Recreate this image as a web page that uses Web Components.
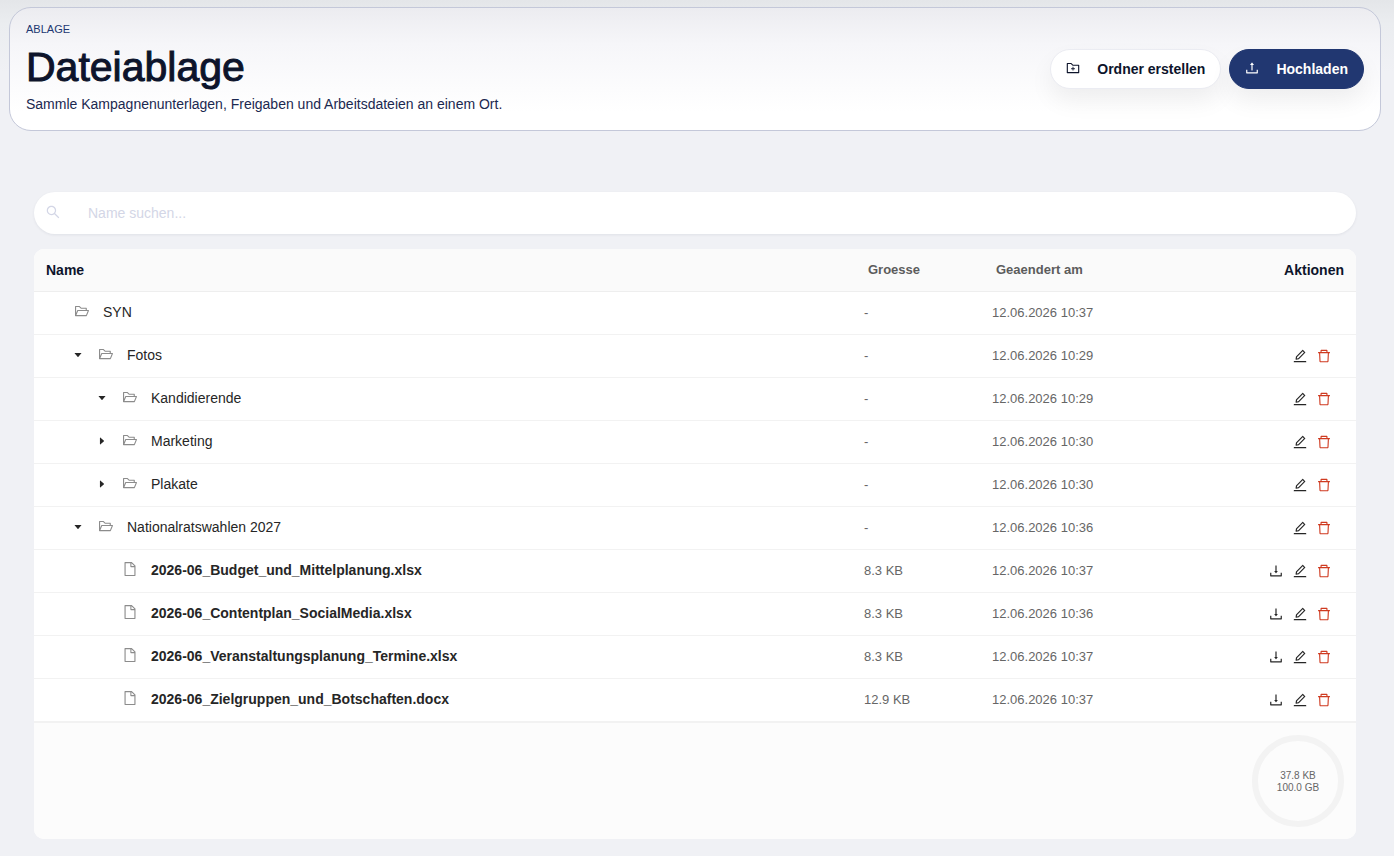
<!DOCTYPE html>
<html lang="de">
<head>
<meta charset="utf-8">
<meta name="viewport" content="width=device-width, initial-scale=1">
<title>Dateiablage</title>
<style>
  body {
    margin: 0;
    min-height: 100vh;
    box-sizing: border-box;
    padding: 7px 13px 17px 9px;
    background: #f0f1f5 linear-gradient(#e4e6e9, #ebedf0 24px, #f0f1f5 72px) no-repeat;
    font-family: "Helvetica Neue", "Liberation Sans", Arial, sans-serif;
    font-size: 14px;
    color: #262626;
  }
  main {
    display: flex;
    flex-direction: column;
    gap: 15px;
    margin: 61px 25px 0;
  }
</style>
</head>
<body>

<page-header>
  <span slot="eyebrow">ABLAGE</span>
  <span slot="title">Dateiablage</span>
  <span slot="text">Sammle Kampagnenunterlagen, Freigaben und Arbeitsdateien an einem Ort.</span>
  <pill-button slot="actions" icon="folder-add">Ordner erstellen</pill-button>
  <pill-button slot="actions" icon="upload" primary>Hochladen</pill-button>
</page-header>

<main>
  <search-field placeholder="Name suchen..."></search-field>
  <file-table>
    <storage-usage slot="footer" used="37.8 KB" total="100.0 GB"></storage-usage>
  </file-table>
</main>

<script>
const TRAY = 'M878 626h-60c-4.4 0-8 3.6-8 8v154H214V634c0-4.4-3.6-8-8-8h-60c-4.4 0-8 3.6-8 8v198c0 17.7 14.3 32 32 32h684c17.7 0 32-14.3 32-32V634c0-4.4-3.6-8-8-8z';

const ICONS = {
  'folder-open': 'M928 444H820V330.4c0-17.7-14.3-32-32-32H473L355.7 186.2a8.15 8.15 0 00-5.5-2.2H96c-17.7 0-32 14.3-32 32v592c0 17.7 14.3 32 32 32h698c13 0 24.8-7.9 29.7-20l134-332c1.5-3.8 2.3-7.9 2.3-12 0-17.7-14.3-32-32-32zM136 256h188.5l119.6 114.4H748V444H238c-13 0-24.8 7.9-29.7 20L136 643.2V256zm635.3 512H159l103.3-256h612.4L771.3 768z',
  'folder-add': 'M484 443.1V528h-84.5c-4.1 0-7.5 3.1-7.5 7v42c0 3.8 3.4 7 7.5 7H484v84.9c0 3.9 3.2 7.1 7 7.1h42c3.9 0 7-3.2 7-7.1V584h84.5c4.1 0 7.5-3.2 7.5-7v-42c0-3.9-3.4-7-7.5-7H540v-84.9c0-3.9-3.1-7.1-7-7.1h-42c-3.8 0-7 3.2-7 7.1zm396-144.7H521L403.7 186.2a8.15 8.15 0 00-5.5-2.2H144c-17.7 0-32 14.3-32 32v592c0 17.7 14.3 32 32 32h736c17.7 0 32-14.3 32-32V330.4c0-17.7-14.3-32-32-32zM840 768H184V256h188.5l119.6 114.4H840V768z',
  'file': 'M854.6 288.6L639.4 73.4c-6-6-14.1-9.4-22.6-9.4H192c-17.7 0-32 14.3-32 32v832c0 17.7 14.3 32 32 32h640c17.7 0 32-14.3 32-32V311.3c0-8.5-3.4-16.7-9.4-22.7zM790.2 326H602V137.8L790.2 326zm1.8 562H232V136h302v216a42 42 0 0042 42h216v494z',
  'upload': 'M400 317.7h73.9V656c0 4.4 3.6 8 8 8h60c4.4 0 8-3.6 8-8V317.7H624c6.7 0 10.4-7.7 6.3-12.9L518.3 163a8 8 0 00-12.6 0l-112 141.7c-4.1 5.3-.4 13 6.3 13z' + TRAY,
  'download': 'M505.7 661a8 8 0 0012.6 0l112-141.7c4.1-5.2.4-12.9-6.3-12.9h-74.1V168c0-4.4-3.6-8-8-8h-60c-4.4 0-8 3.6-8 8v338.3H400c-6.7 0-10.4 7.7-6.3 12.9l112 141.8z' + TRAY,
  'edit': 'M257.7 752c2 0 4-.2 6-.5L431.9 722c2-.4 3.9-1.3 5.3-2.8l423.9-423.9a9.96 9.96 0 000-14.1L694.9 114.9c-1.9-1.9-4.4-2.9-7.1-2.9s-5.2 1-7.1 2.9L256.8 538.8c-1.5 1.5-2.4 3.3-2.8 5.3l-29.5 168.2a33.5 33.5 0 009.4 29.8c6.6 6.4 14.9 9.9 23.8 9.9zm67.4-174.4L687.8 215l73.3 73.3-362.7 362.6-88.9 15.7 15.6-89zM880 836H144c-17.7 0-32 14.3-32 32v36c0 4.4 3.6 8 8 8h784c4.4 0 8-3.6 8-8v-36c0-17.7-14.3-32-32-32z',
  'delete': 'M360 184h-8c4.4 0 8-3.6 8-8v8h304v-8c0 4.4 3.6 8 8 8h-8v72h72v-80c0-35.3-28.7-64-64-64H352c-35.3 0-64 28.7-64 64v80h72v-72zm504 72H160c-17.7 0-32 14.3-32 32v32c0 4.4 3.6 8 8 8h60.4l24.7 523c1.6 34.1 29.8 61 63.9 61h454c34.2 0 62.3-26.8 63.9-61l24.7-523H888c4.4 0 8-3.6 8-8v-32c0-17.7-14.3-32-32-32zM731.3 840H292.7l-24.2-512h487l-24.2 512z',
  'caret': 'M840.4 300H183.6c-19.7 0-30.7 20.8-18.5 35l328.4 380.8c9.4 10.9 27.5 10.9 37 0L858.9 335c12.2-14.2 1.2-35-18.5-35z',
  'search': 'M909.6 854.5L649.9 594.8C690.2 542.7 712 479 712 412c0-80.2-31.3-155.4-87.9-212.1-56.6-56.7-132-87.9-212.1-87.9s-155.5 31.3-212.1 87.9C143.2 256.5 112 331.8 112 412c0 80.1 31.3 155.5 87.9 212.1C256.5 680.8 331.8 712 412 712c67 0 130.6-21.8 182.7-62l259.7 259.6a8.2 8.2 0 0011.6 0l43.6-43.5a8.2 8.2 0 000-11.6zM570.4 570.4C528 612.7 471.8 636 412 636s-116-23.3-158.4-65.6C211.3 528 188 471.8 188 412s23.3-116.1 65.6-158.4C296 211.3 352.2 188 412 188s116.1 23.2 158.4 65.6S636 352.2 636 412s-23.3 116.1-65.6 158.4z'
};

class UiIcon extends HTMLElement {
  constructor() {
    super();
    this.shadowDOM = this.attachShadow({mode: 'open'});
  }

  connectedCallback() {
    this.shadowDOM.innerHTML = `
      <style>
        :host {
          display: inline-block;
          flex: none;
          width: var(--icon-size, 16px);
          height: var(--icon-size, 16px);
        }
        svg {
          display: block;
          width: 100%;
          height: 100%;
        }
      </style>
      <svg viewBox="0 0 1024 1024" fill="currentColor" aria-hidden="true">
        <path d="${ICONS[this.getAttribute('name')]}"/>
      </svg>
    `;
  }
}

customElements.define('ui-icon', UiIcon);

class PillButton extends HTMLElement {
  constructor() {
    super();
    this.shadowDOM = this.attachShadow({mode: 'open'});
  }

  connectedCallback() {
    this.shadowDOM.innerHTML = `
      <style>
        :host {
          display: block;
        }
        button {
          display: flex;
          align-items: center;
          gap: 16px;
          height: 40px;
          padding: 0 15px 0 14px;
          border: 1px solid #ebecf2;
          border-radius: 20px;
          background: #fff;
          box-shadow: 0 12px 24px rgba(0, 0, 0, 0.06);
          color: #0d142b;
          font: bold 14px/20px "Helvetica Neue", "Liberation Sans", Arial, sans-serif;
          white-space: nowrap;
          cursor: pointer;
        }
        :host([primary]) button {
          border-color: #213771;
          background: #213771;
          color: #fff;
        }
        ui-icon {
          margin-bottom: 2px;
        }
      </style>
      <button type="button">
        <ui-icon name="${this.getAttribute('icon')}"></ui-icon>
        <slot></slot>
      </button>
    `;
  }
}

customElements.define('pill-button', PillButton);

class PageHeader extends HTMLElement {
  constructor() {
    super();
    this.shadowDOM = this.attachShadow({mode: 'open'});
  }

  connectedCallback() {
    this.shadowDOM.innerHTML = `
      <style>
        :host {
          display: block;
        }
        header {
          display: flex;
          align-items: center;
          justify-content: space-between;
          gap: 24px;
          padding: 15px 16px;
          border: 1px solid #c4c8d9;
          border-radius: 22px;
          background: linear-gradient(#ececf0, #f6f6f9 30%, #fff 85%);
        }
        p, h1 {
          margin: 0;
        }
        .eyebrow {
          font-size: 11px;
          line-height: 12px;
          color: #213771;
        }
        h1 {
          margin-top: 6px;
          font-size: 41px;
          line-height: 52px;
          font-weight: 500;
          color: #0d142b;
          -webkit-text-stroke: 1px #0d142b;
        }
        .text {
          line-height: 22px;
          color: #1b2850;
        }
        .actions {
          display: flex;
          gap: 8px;
        }
      </style>
      <header>
        <div>
          <p class="eyebrow"><slot name="eyebrow"></slot></p>
          <h1><slot name="title"></slot></h1>
          <p class="text"><slot name="text"></slot></p>
        </div>
        <div class="actions"><slot name="actions"></slot></div>
      </header>
    `;
  }
}

customElements.define('page-header', PageHeader);

class SearchField extends HTMLElement {
  constructor() {
    super();
    this.shadowDOM = this.attachShadow({mode: 'open'});
  }

  connectedCallback() {
    const placeholder = this.getAttribute('placeholder');
    this.shadowDOM.innerHTML = `
      <style>
        :host {
          display: block;
        }
        label {
          display: flex;
          align-items: center;
          gap: 27px;
          height: 42px;
          padding: 0 11px;
          border-radius: 21px;
          background: #fff;
          box-shadow: 0 1px 3px rgba(20, 30, 60, 0.07);
          color: #d3d6e6;
        }
        ui-icon {
          margin-bottom: 2px;
        }
        input {
          flex: 1;
          min-width: 0;
          padding: 0;
          border: 0;
          outline: 0;
          background: none;
          color: #0d142b;
          font: 14px/20px "Helvetica Neue", "Liberation Sans", Arial, sans-serif;
        }
        input::placeholder {
          color: #d3d6e6;
        }
      </style>
      <label>
        <ui-icon name="search"></ui-icon>
        <input type="search" placeholder="${placeholder}" aria-label="${placeholder}">
      </label>
    `;
  }
}

customElements.define('search-field', SearchField);

class StorageUsage extends HTMLElement {
  constructor() {
    super();
    this.shadowDOM = this.attachShadow({mode: 'open'});
  }

  connectedCallback() {
    this.shadowDOM.innerHTML = `
      <style>
        :host {
          display: grid;
          place-content: center;
          box-sizing: border-box;
          width: 92px;
          height: 92px;
          padding-top: 2px;
          border: 6px solid #f3f3f3;
          border-radius: 50%;
          font-size: 10px;
          line-height: 12px;
          text-align: center;
          color: #666;
        }
      </style>
      <span>${this.getAttribute('used')}</span>
      <span>${this.getAttribute('total')}</span>
    `;
  }
}

customElements.define('storage-usage', StorageUsage);

class FileTable extends HTMLElement {
  constructor() {
    super();
    this.shadowDOM = this.attachShadow({mode: 'open'});
  }

  set files(files) {
    this._files = files;
    this.render();
  }

  renderAction(icon, label) {
    return `<button type="button" class="${icon}" aria-label="${label}"><ui-icon name="${icon}"></ui-icon></button>`;
  }

  renderRow(file) {
    const isFile = file.type === 'file';
    const toggle = file.open === undefined
      ? '<span class="toggle"></span>'
      : `<button type="button" class="toggle" aria-label="${file.name}" aria-expanded="${file.open}"><ui-icon name="caret"></ui-icon></button>`;

    return `
      <tr>
        <td>
          <div class="name level-${file.level} ${isFile ? 'is-file' : ''}">
            ${toggle}
            <ui-icon class="type" name="${isFile ? 'file' : 'folder-open'}"></ui-icon>
            <span>${file.name}</span>
          </div>
        </td>
        <td class="meta">${file.size || '-'}</td>
        <td class="meta">${file.changed}</td>
        <td>
          <div class="actions">
            ${isFile ? this.renderAction('download', 'Herunterladen') : ''}
            ${file.locked ? '' : this.renderAction('edit', 'Umbenennen') + this.renderAction('delete', 'Loeschen')}
          </div>
        </td>
      </tr>
    `;
  }

  render() {
    this.shadowDOM.innerHTML = `
      <style>
        :host {
          display: block;
          border-radius: 10px;
          overflow: hidden;
          background: #fff;
        }
        table {
          width: 100%;
          table-layout: fixed;
          border-collapse: separate;
          border-spacing: 0;
        }
        .col-size {
          width: 128px;
        }
        .col-changed {
          width: 256px;
        }
        .col-actions {
          width: 120px;
        }
        th, td {
          box-sizing: border-box;
          height: 43px;
          padding: 0 12px;
          border-bottom: 1px solid #f2f2f2;
          line-height: 20px;
          text-align: left;
        }
        th {
          background: #fafafa;
          border-color: #eee;
          color: #0d142b;
        }
        th.minor {
          padding-left: 16px;
          font-size: 13px;
          color: #5c5c5c;
        }
        th:last-child {
          text-align: right;
        }
        .meta {
          font-size: 13px;
          color: #666;
        }
        .name {
          display: flex;
          align-items: center;
          padding-bottom: 2px;
          white-space: nowrap;
        }
        .level-1 {
          padding-left: 20px;
        }
        .level-2 {
          padding-left: 44px;
        }
        .level-0 .toggle {
          width: 20px;
        }
        .is-file {
          font-weight: bold;
        }
        button {
          display: block;
          padding: 0;
          border: 0;
          background: none;
          color: #262626;
          cursor: pointer;
        }
        .toggle {
          display: grid;
          place-content: center;
          width: 24px;
          height: 24px;
          --icon-size: 10px;
        }
        .toggle[aria-expanded="false"] ui-icon {
          transform: rotate(-90deg);
        }
        .type {
          margin: 0 13px 2px 8px;
          color: #8c8c8c;
        }
        .actions {
          display: flex;
          justify-content: flex-end;
          gap: 8px;
          padding: 2px 12px 0 0;
        }
        .delete {
          color: #cf3a20;
        }
        footer {
          display: flex;
          justify-content: flex-end;
          padding: 12px;
          border-top: 1px solid #f2f2f2;
          background: #fcfcfc;
        }
      </style>
      <table>
        <colgroup>
          <col>
          <col class="col-size">
          <col class="col-changed">
          <col class="col-actions">
        </colgroup>
        <thead>
          <tr>
            <th scope="col">Name</th>
            <th scope="col" class="minor">Groesse</th>
            <th scope="col" class="minor">Geaendert am</th>
            <th scope="col">Aktionen</th>
          </tr>
        </thead>
        <tbody>${this._files.map((file) => this.renderRow(file)).join('')}</tbody>
      </table>
      <footer><slot name="footer"></slot></footer>
    `;
  }
}

customElements.define('file-table', FileTable);

document.querySelector('file-table').files = [
  {level: 0, name: 'SYN', changed: '12.06.2026 10:37', locked: true},
  {level: 1, name: 'Fotos', changed: '12.06.2026 10:29', open: true},
  {level: 2, name: 'Kandidierende', changed: '12.06.2026 10:29', open: true},
  {level: 2, name: 'Marketing', changed: '12.06.2026 10:30', open: false},
  {level: 2, name: 'Plakate', changed: '12.06.2026 10:30', open: false},
  {level: 1, name: 'Nationalratswahlen 2027', changed: '12.06.2026 10:36', open: true},
  {level: 2, type: 'file', name: '2026-06_Budget_und_Mittelplanung.xlsx', size: '8.3 KB', changed: '12.06.2026 10:37'},
  {level: 2, type: 'file', name: '2026-06_Contentplan_SocialMedia.xlsx', size: '8.3 KB', changed: '12.06.2026 10:36'},
  {level: 2, type: 'file', name: '2026-06_Veranstaltungsplanung_Termine.xlsx', size: '8.3 KB', changed: '12.06.2026 10:37'},
  {level: 2, type: 'file', name: '2026-06_Zielgruppen_und_Botschaften.docx', size: '12.9 KB', changed: '12.06.2026 10:37'}
];
</script>
</body>
</html>
